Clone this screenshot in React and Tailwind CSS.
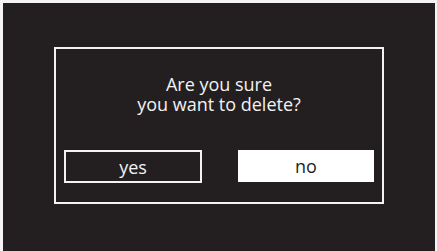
import React from 'react';

export default function App() {
  return (
    <div className="w-[437px] h-[251px] bg-[#f4f4f4] pt-[3px] pl-[3px] pr-[2px]">
      <div
        className="h-full bg-[#231f20] pt-[44px] pl-[51px]"
        style={{ fontFamily: '"Open Sans", "Liberation Sans", sans-serif' }}
      >
        {/* dialog */}
        <div className="w-[330px] h-[157px] border-2 border-[#f2f2f2] flex flex-col px-[8px]">
          <p className="pt-[25px] text-center text-[18px] leading-[20px] text-[#f2f2f2]">
            Are you sure
            <br />
            you want to delete?
          </p>
          <div className="mt-auto mb-[19px] flex justify-between">
            <button className="w-[138px] h-[33px] border-2 border-[#f2f2f2] text-[18px] leading-none text-[#f2f2f2]">
              yes
            </button>
            <button className="w-[136px] h-[32px] bg-white text-[18px] leading-none text-[#231f20]">
              no
            </button>
          </div>
        </div>
      </div>
    </div>
  );
}
